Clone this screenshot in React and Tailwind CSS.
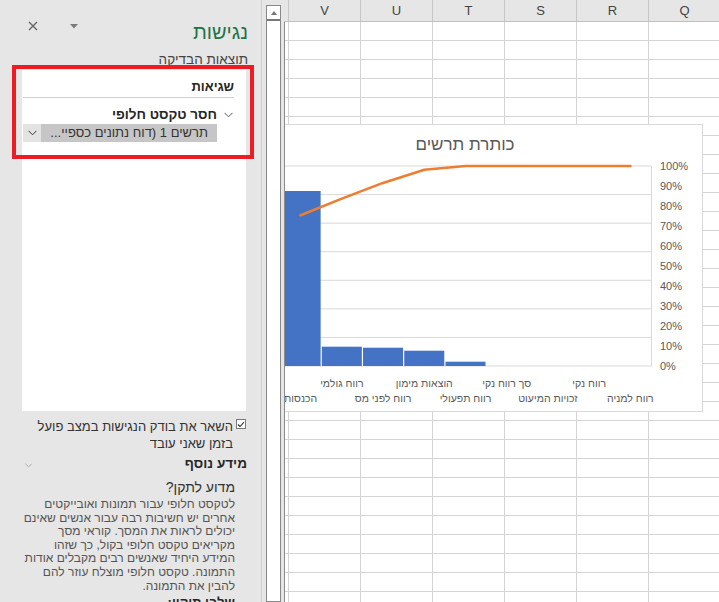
import React from "react";

const COLS = ["V", "U", "T", "S", "R", "Q"];
const ROWS = Array.from({ length: 31 });

const PARA = [
  "לטקסט חלופי עבור תמונות ואובייקטים",
  "אחרים יש חשיבות רבה עבור אנשים שאינם",
  "יכולים לראות את המסך. קוראי מסך",
  "מקריאים טקסט חלופי בקול, כך שזהו",
  "המידע היחיד שאנשים רבים מקבלים אודות",
  "התמונה. טקסט חלופי מוצלח עוזר להם",
  "להבין את התמונה.",
];

// pareto chart data (bar heights in px on the primary axis)
const CAT_W = 41.22;
const X0 = -5;
const BOTTOM = 242;
const TOP = 42;
const cats = [
  { label: "הכנסות", row: 1, bar: 175 },
  { label: "רווח גולמי", row: 0, bar: 19.3 },
  { label: "רווח לפני מס", row: 1, bar: 18.3 },
  { label: "הוצאות מימון", row: 0, bar: 15.3 },
  { label: "רווח תפעולי", row: 1, bar: 4.3 },
  { label: "סך רווח נקי", row: 0, bar: 0 },
  { label: "זכויות המיעוט", row: 1, bar: 0 },
  { label: "רווח נקי", row: 0, bar: 0 },
  { label: "רווח למניה", row: 1, bar: 0 },
];

const Chevron = ({ w = 9, color = "#444" }) => (
  <svg width={w + 1} height={Math.round(w / 2) + 2} viewBox="0 0 10 6">
    <polyline points="0.6,0.6 5,5 9.4,0.6" fill="none" stroke={color} strokeWidth="1.1" />
  </svg>
);

const Chart = () => {
  const total = cats.reduce((s, c) => s + c.bar, 0);
  let acc = 0;
  const pts = cats.map((c, i) => {
    acc += c.bar;
    const x = X0 + CAT_W * (i + 0.5);
    const y = BOTTOM - (acc / total) * (BOTTOM - TOP);
    return `${x.toFixed(1)},${y.toFixed(1)}`;
  });
  const grid = Array.from({ length: 7 }, (_, k) => TOP + (k * (BOTTOM - TOP)) / 7);
  const pct = ["100%", "90%", "80%", "70%", "60%", "50%", "40%", "30%", "20%", "10%", "0%"];

  return (
    <svg width="418" height="288" className="block" style={{ fontFamily: "'Liberation Sans', sans-serif" }}>
      <rect x="-2" y="0.5" width="419.5" height="287" fill="#fff" stroke="#d9d9d9" />
      <text x="180" y="26" textAnchor="middle" fontSize="17" fill="#595959">
        כותרת תרשים
      </text>
      {grid.map((y) => (
        <line key={y} x1="0" x2="366.5" y1={y} y2={y} stroke="#d9d9d9" />
      ))}
      <line x1="366.5" x2="366.5" y1={TOP} y2={BOTTOM} stroke="#d9d9d9" />
      <line x1="0" x2="366.5" y1={BOTTOM} y2={BOTTOM} stroke="#d9d9d9" />
      {cats.map((c, i) =>
        c.bar > 0 ? (
          <rect
            key={i}
            x={X0 + CAT_W * i + 0.6}
            y={BOTTOM - c.bar}
            width={CAT_W - 1.2}
            height={c.bar}
            fill="#4472c4"
          />
        ) : null
      )}
      <polyline points={pts.join(" ")} fill="none" stroke="#ed7d31" strokeWidth="2.6" strokeLinejoin="round" strokeLinecap="round" />
      {pct.map((p, k) => (
        <text key={p} x="375" y={TOP + 20 * k + 4} fontSize="11" fill="#595959">
          {p}
        </text>
      ))}
      {cats.map((c, i) => (
        <text
          key={c.label}
          x={X0 + CAT_W * (i + 0.5)}
          y={c.row ? 278 : 263}
          textAnchor="middle"
          fontSize="10.5"
          fill="#595959"
        >
          {c.label}
        </text>
      ))}
    </svg>
  );
};

const Pane = () => (
  <div
    dir="rtl"
    className="relative h-full w-[262px] shrink-0 border-r border-[#d0d0d0] bg-[#e6e6e6] pl-[22px] pr-[15px] text-[#444]"
  >
    {/* header */}
    <div className="mt-[20px] flex h-[24px] items-start justify-between">
      <div className="-mr-[2px] text-[20px] leading-[24px] text-[#217346]">נגישות</div>
      <div className="ml-[6px] flex items-center gap-[32px] pt-[1px]">
        <svg width="8" height="5" viewBox="0 0 8 5">
          <polygon points="0,0 8,0 4,4.5" fill="#7a7a7a" />
        </svg>
        <svg width="10" height="10" viewBox="0 0 10 10">
          <path d="M1 1 L9 9 M9 1 L1 9" stroke="#666" strokeWidth="1.4" />
        </svg>
      </div>
    </div>
    <div className="-mr-[2px] mt-[8px] text-[13.5px] leading-[16px] text-[#444]">תוצאות הבדיקה</div>

    {/* results list */}
    <div className="mt-[2px] h-[341px] bg-white pl-[1px] pr-[12px]">
      <div className="border-b border-[#d0d0d0] pb-[2px] pt-[9px] text-[13px] font-bold leading-[16px] text-[#262626]">
        שגיאות
      </div>
      <div className="mt-[9px] flex h-[16px] items-center">
        <div className="-mr-[5px] flex w-[22px] justify-center">
          <Chevron w={8} color="#555" />
        </div>
        <div className="text-[13.5px] font-bold leading-[16px] text-[#262626]">חסר טקסט חלופי</div>
      </div>
      <div className="ml-0 mr-[17px] mt-[1px] flex h-[18px]">
        <div className="flex flex-1 items-center truncate bg-[#c6c6c6] pr-[9px] text-[13px] leading-[18px] text-[#333]">
          תרשים 1 (דוח נתונים כספיי...
        </div>
        <div className="flex w-[18px] items-center justify-center bg-[#e3e3e3]">
          <Chevron w={8} color="#333" />
        </div>
      </div>
    </div>

    {/* red highlight */}
    <div className="absolute left-[12px] top-[65px] h-[94px] w-[242px] border-4 border-[#ec1c24]" />

    {/* keep running */}
    <div className="mt-[7px] flex items-start">
      <div className="mt-[1px] flex h-[10px] w-[10px] shrink-0 items-center justify-center border border-[#7a7a7a] bg-white">
        <svg width="8" height="7" viewBox="0 0 8 7">
          <polyline points="1,3.5 3,5.5 7,1.2" fill="none" stroke="#333" strokeWidth="1.1" />
        </svg>
      </div>
      <div className="mr-[3px] text-[13px] leading-[17px] text-[#333]">
        <div>השאר את בודק הנגישות במצב פועל</div>
        <div>בזמן שאני עובד</div>
      </div>
    </div>

    <div className="-mr-[1px] mt-[3px] flex h-[17px] items-center justify-between">
      <div className="text-[13.5px] font-bold leading-[17px] text-[#262626]">מידע נוסף</div>
      <div className="pl-[3px] pt-[3px]">
        <Chevron w={6} color="#999" />
      </div>
    </div>

    <div className="mr-[11px] mt-[6px] text-[14px] leading-[18px] text-[#333]">מדוע לתקן?</div>
    <div className="mr-[11px] mt-[2px] text-[12px] leading-[13.6px] text-[#555]">
      {PARA.map((l) => (
        <div key={l} className="whitespace-nowrap">
          {l}
        </div>
      ))}
    </div>
    <div className="mr-[11px] mt-[2px] text-[13px] font-bold leading-[16px] text-[#262626]">שלבי תיקון:</div>
  </div>
);

export default function App() {
  return (
    <div
      className="flex h-[602px] w-[719px] overflow-hidden bg-[#e6e6e6]"
      style={{ fontFamily: "'Liberation Sans', Arial, sans-serif" }}
    >
      <Pane />

      {/* vertical scrollbar */}
      <div className="h-full w-[22px] shrink-0 pl-[4px] pt-[5px]">
        <div className="flex h-full w-[15px] flex-col border border-[#888] bg-white">
          <div className="flex h-[15px] items-center justify-center border-b-2 border-[#777]">
            <svg width="6" height="4" viewBox="0 0 6 4">
              <polygon points="0,4 6,4 3,0" fill="#777" />
            </svg>
          </div>
        </div>
      </div>

      {/* sheet */}
      <div className="flex min-w-0 flex-1 flex-col">
        <div className="flex h-[22px] shrink-0 border-b border-[#c0c0c0] bg-[#e6e6e6]">
          <div className="w-[4px] shrink-0" />
          {COLS.map((c) => (
            <div
              key={c}
              className="flex w-[72px] shrink-0 items-center justify-center border-l border-[#c6c6c6] text-[13px] text-[#444]"
            >
              {c}
            </div>
          ))}
        </div>
        <div className="relative flex-1 overflow-hidden border-l border-[#8c8c8c] bg-white">
          {ROWS.map((_, r) => (
            <div key={r} className="flex h-[19px]">
              <div className="w-[3px] shrink-0 border-b border-[#d4d4d4]" />
              {COLS.map((c) => (
                <div key={c} className="w-[72px] shrink-0 border-b border-l border-[#d4d4d4]" />
              ))}
            </div>
          ))}
          <div className="absolute left-0 top-[102px]">
            <Chart />
          </div>
        </div>
      </div>
    </div>
  );
}
